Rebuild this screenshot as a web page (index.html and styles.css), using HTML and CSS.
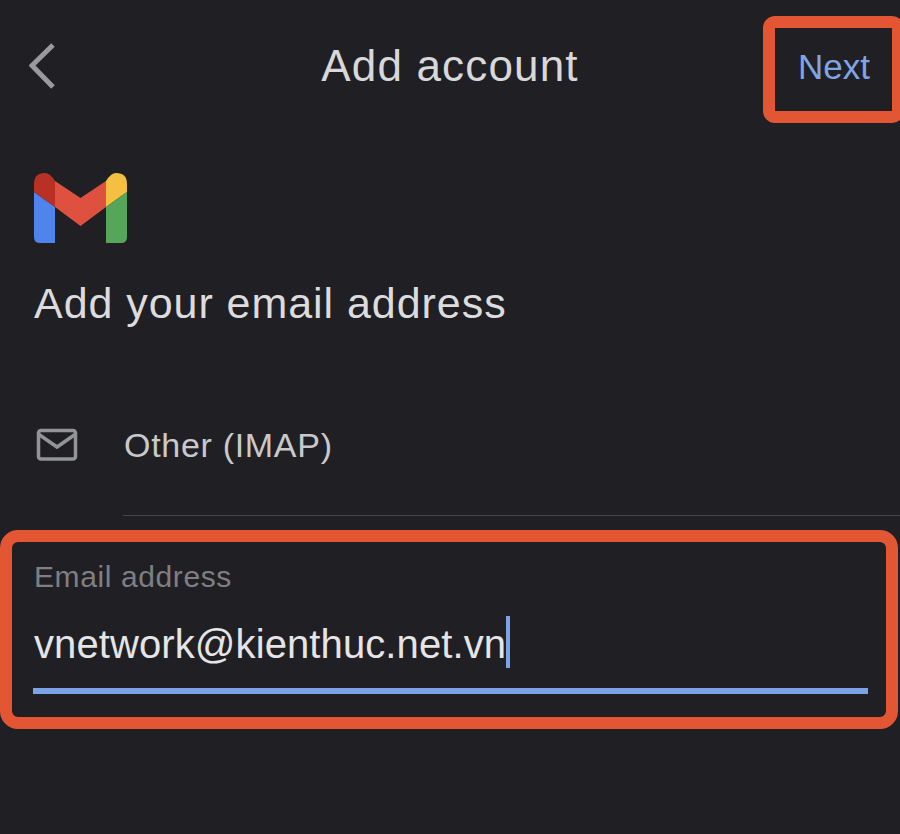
FILE: index.html
```html
<!DOCTYPE html>
<html lang="en">
<head>
<meta charset="utf-8">
<title>Add account</title>
<link rel="stylesheet" href="styles.css">
</head>
<body>
<main class="screen">
  <header class="topbar">
    <svg class="back" width="26" height="46" viewBox="0 0 26 46" aria-hidden="true"><path d="M24 2 L3 22.500 L24 44"/></svg>
    <h1 class="title">Add account</h1>
    <div class="next-box"><span class="next">Next</span></div>
  </header>

  <svg class="gmail" width="93" height="70" viewBox="34 173 93 70" aria-hidden="true">
    <path fill="#4f84ec" d="M34 192 L55 207 V243 H40 Q34 243 34 237Z"/>
    <path fill="#b93125" d="M34 192 V184 Q34 173 45 173 Q50 173 55 181 V207Z"/>
    <path fill="#df513f" d="M55 181 L80.500 198 L106 181 V207 L80.500 226 L55 207Z"/>
    <path fill="#f5bf41" d="M106 181 Q111 173 116 173 Q127 173 127 184 V192 L106 207Z"/>
    <path fill="#56a65a" d="M106 207 L127 192 V237 Q127 243 121 243 H106Z"/>
  </svg>

  <h2 class="heading">Add your email address</h2>

  <div class="provider">
    <svg class="mail" width="42" height="34" viewBox="0 0 42 34" aria-hidden="true">
      <rect x="2.500" y="2.500" width="37" height="28.500" rx="2.500"/>
      <path d="M3 6.500 L21 19 L39 6.500"/>
    </svg>
    <span class="provider-name">Other (IMAP)</span>
  </div>
  <div class="divider"></div>

  <section class="field-box">
    <div class="field-label">Email address</div>
    <div class="field-value"><span class="field-text">vnetwork@kienthuc.net.vn</span><i class="cursor"></i></div>
    <div class="field-line"></div>
  </section>
</main>
</body>
</html>
```
FILE: styles.css
```css
* { box-sizing: border-box; }
html, body { margin: 0; padding: 0; }
body {
  background: #202024;
  font-family: "Liberation Sans", Arial, sans-serif;
  overflow: hidden;
}
.screen {
  width: 900px;
  height: 834px;
  overflow: hidden;
}
.topbar {
  display: grid;
  grid-template-columns: 1fr auto 1fr;
  align-items: center;
  height: 107px;
  margin-top: 16px;
}
.back {
  margin: -7px 0 0 29px;
}
.back path {
  fill: none;
  stroke: #9a9a9c;
  stroke-width: 5px;
}
.title {
  margin: -7px 0 0;
  font-size: 44px;
  letter-spacing: 1.150px;
  font-weight: 400;
  color: #d8d8da;
  line-height: 50px;
}
.next-box {
  justify-self: end;
  width: 141px;
  height: 107px;
  margin-right: -4px;
  border: 12px solid #e25634;
  border-radius: 12px;
  padding: 16px 0 0 23px;
}
.next {
  font-size: 35px;
  line-height: 46px;
  color: #7fa5e6;
}
.gmail {
  display: block;
  margin: 50px 0 0 34px;
}
.heading {
  margin: 34px 0 0 34px;
  font-size: 43px;
  letter-spacing: 0.950px;
  line-height: 52px;
  font-weight: 400;
  color: #dcdcde;
}
.provider {
  display: flex;
  align-items: center;
  height: 50px;
  margin-top: 91px;
  padding-left: 36px;
}
.mail { margin-right: 46px; }
.mail rect, .mail path {
  fill: none;
  stroke: #929497;
  stroke-width: 3.500;
}
.provider-name {
  font-size: 34px;
  letter-spacing: 0.700px;
  line-height: 40px;
  color: #c9c9cb;
}
.divider {
  height: 1px;
  margin: 45px 0 0 123px;
  background: #45454a;
}
.field-box {
  width: 898px;
  height: 199px;
  margin-top: 14px;
  border: 12.500px solid #e25634;
  border-radius: 18px;
  padding: 17px 18px 0 22px;
}
.field-label {
  font-size: 30px;
  letter-spacing: 0.600px;
  line-height: 36px;
  color: #7f7f83;
}
.field-value {
  display: flex;
  align-items: center;
  height: 52px;
  margin-top: 21px;
  font-size: 40px;
  letter-spacing: 0.100px;
  color: #e5e5e7;
}
.field-text { padding-top: 4px; }
.cursor {
  display: block;
  width: 4px;
  height: 52px;
  background: #7ba3e8;
}
.field-line {
  height: 6px;
  margin-top: 20px;
  margin-left: -1px;
  background: #7ba3e8;
}
```
